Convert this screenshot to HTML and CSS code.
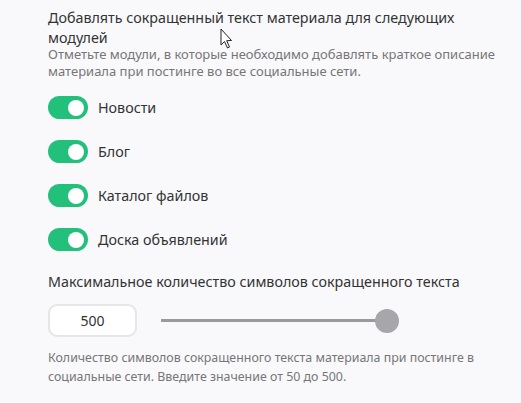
FILE: index.html
```html
<!DOCTYPE html>
<html lang="ru">
<head>
<meta charset="utf-8">
<link rel="stylesheet" href="styles.css">
</head>
<body>
<div class="panel">
  <div class="section">
    <div class="title">Добавлять сокращенный текст материала для следующих модулей</div>
    <div class="desc">Отметьте модули, в которые необходимо добавлять краткое описание материала при постинге во все социальные сети.</div>
  </div>
  <ul class="toggles">
    <li class="row"><span class="toggle"><span class="knob"></span></span><span class="label">Новости</span></li>
    <li class="row"><span class="toggle"><span class="knob"></span></span><span class="label">Блог</span></li>
    <li class="row"><span class="toggle"><span class="knob"></span></span><span class="label">Каталог файлов</span></li>
    <li class="row"><span class="toggle"><span class="knob"></span></span><span class="label">Доска объявлений</span></li>
  </ul>
  <div class="section2">
    <div class="title">Максимальное количество символов сокращенного текста</div>
    <div class="controls">
      <div class="num">500</div>
      <div class="slider"><span class="track"></span><span class="thumb"></span></div>
    </div>
    <div class="desc help">Количество символов сокращенного текста материала при постинге в социальные сети. Введите значение от 50 до 500.</div>
  </div>
  <svg class="cursor" width="14" height="22" viewBox="0 0 14 22"><path d="M1 1 L1 17 L4.5 13.5 L7.5 20 L9.5 19 L6.7 12.7 L11.5 12.5 Z" fill="#fff" stroke="#222" stroke-width="1" stroke-linejoin="round"/></svg>
</div>
</body>
</html>
```
FILE: styles.css
```css
html, body {
  margin: 0;
  padding: 0;
  background: #f9f9fb;
}
body {
  font-family: "Noto Sans", "Open Sans", sans-serif;
  color: #333;
  width: 521px;
  height: 403px;
  overflow: hidden;
}
.panel {
  position: relative;
  padding: 8px 20px 0 48px;
}
.title {
  font-size: 14.3px;
  line-height: 20px;
  color: #333;
}
.section .desc {
  margin-top: -2px;
}
.desc {
  font-size: 13px;
  line-height: 17px;
  color: #767676;
}
.toggles {
  list-style: none;
  margin: 16px 0 0;
  padding: 0;
  display: flex;
  flex-direction: column;
  gap: 21px;
}
.row {
  display: flex;
  align-items: center;
  gap: 10px;
  height: 23px;
}
.toggle {
  width: 40px;
  height: 23px;
  border-radius: 12px;
  background: #22c07b;
  display: flex;
  align-items: center;
  justify-content: flex-end;
  padding-right: 4px;
  box-sizing: border-box;
}
.knob {
  width: 16px;
  height: 16px;
  border-radius: 50%;
  background: #fff;
}
.label {
  font-size: 14.3px;
  color: #333;
}
.section2 {
  margin-top: 21px;
}
.controls {
  display: flex;
  align-items: center;
  gap: 24px;
  margin-top: 12px;
}
.num {
  width: 89px;
  height: 33px;
  box-sizing: border-box;
  border: 2px solid #e6e6e8;
  border-radius: 9px;
  background: #fff;
  font-size: 14px;
  color: #333;
  display: flex;
  align-items: center;
  justify-content: center;
}
.slider {
  position: relative;
  width: 238px;
  height: 24px;
  display: flex;
  align-items: center;
}
.track {
  display: block;
  width: 226px;
  height: 3px;
  background: #9a9a9e;
}
.thumb {
  position: absolute;
  right: 0;
  top: 0;
  width: 24px;
  height: 24px;
  border-radius: 50%;
  background: #a6a6ab;
}
.help {
  font-size: 12.4px;
  margin-top: 11px;
  line-height: 19px;
}
.cursor {
  position: absolute;
  left: 220px;
  top: 28px;
}
```
